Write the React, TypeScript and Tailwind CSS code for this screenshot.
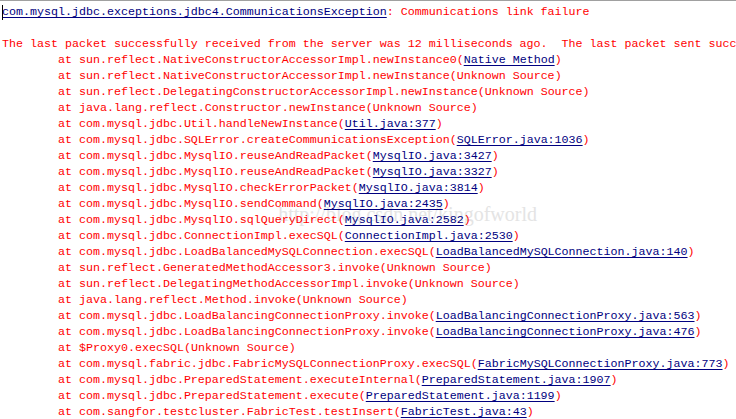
import React from 'react';

type Frame = { call: string; src: string; link?: boolean };

const frames: Frame[] = [
  { call: 'sun.reflect.NativeConstructorAccessorImpl.newInstance0', src: 'Native Method', link: true },
  { call: 'sun.reflect.NativeConstructorAccessorImpl.newInstance', src: 'Unknown Source' },
  { call: 'sun.reflect.DelegatingConstructorAccessorImpl.newInstance', src: 'Unknown Source' },
  { call: 'java.lang.reflect.Constructor.newInstance', src: 'Unknown Source' },
  { call: 'com.mysql.jdbc.Util.handleNewInstance', src: 'Util.java:377', link: true },
  { call: 'com.mysql.jdbc.SQLError.createCommunicationsException', src: 'SQLError.java:1036', link: true },
  { call: 'com.mysql.jdbc.MysqlIO.reuseAndReadPacket', src: 'MysqlIO.java:3427', link: true },
  { call: 'com.mysql.jdbc.MysqlIO.reuseAndReadPacket', src: 'MysqlIO.java:3327', link: true },
  { call: 'com.mysql.jdbc.MysqlIO.checkErrorPacket', src: 'MysqlIO.java:3814', link: true },
  { call: 'com.mysql.jdbc.MysqlIO.sendCommand', src: 'MysqlIO.java:2435', link: true },
  { call: 'com.mysql.jdbc.MysqlIO.sqlQueryDirect', src: 'MysqlIO.java:2582', link: true },
  { call: 'com.mysql.jdbc.ConnectionImpl.execSQL', src: 'ConnectionImpl.java:2530', link: true },
  { call: 'com.mysql.jdbc.LoadBalancedMySQLConnection.execSQL', src: 'LoadBalancedMySQLConnection.java:140', link: true },
  { call: 'sun.reflect.GeneratedMethodAccessor3.invoke', src: 'Unknown Source' },
  { call: 'sun.reflect.DelegatingMethodAccessorImpl.invoke', src: 'Unknown Source' },
  { call: 'java.lang.reflect.Method.invoke', src: 'Unknown Source' },
  { call: 'com.mysql.jdbc.LoadBalancingConnectionProxy.invoke', src: 'LoadBalancingConnectionProxy.java:563', link: true },
  { call: 'com.mysql.jdbc.LoadBalancingConnectionProxy.invoke', src: 'LoadBalancingConnectionProxy.java:476', link: true },
  { call: '$Proxy0.execSQL', src: 'Unknown Source' },
  { call: 'com.mysql.fabric.jdbc.FabricMySQLConnectionProxy.execSQL', src: 'FabricMySQLConnectionProxy.java:773', link: true },
  { call: 'com.mysql.jdbc.PreparedStatement.executeInternal', src: 'PreparedStatement.java:1907', link: true },
  { call: 'com.mysql.jdbc.PreparedStatement.execute', src: 'PreparedStatement.java:1199', link: true },
  { call: 'com.sangfor.testcluster.FabricTest.testInsert', src: 'FabricTest.java:43', link: true },
];

const Link: React.FC<{ children: React.ReactNode }> = ({ children }) => (
  <span className="text-[#000080] underline decoration-[#000080] underline-offset-[2px]">{children}</span>
);

const App: React.FC = () => {
  return (
    <div className="relative w-[736px] h-[419px] overflow-hidden bg-white border-t border-[#a0a0a0]">
      {/* faint blog watermark */}
      <div
        className="absolute top-[203px] right-[199px] text-[20px] leading-none text-[#e4e4e4] whitespace-pre"
        style={{ fontFamily: '"Liberation Serif", serif' }}
      >
        http://blog.csdn.net/kingofworld
      </div>

      <div
        className="relative pt-[3px] pl-[2px] text-[11.67px] leading-[16px] text-[#ff0000] whitespace-pre"
        style={{ fontFamily: '"Liberation Mono", monospace' }}
      >
        {/* caret */}
        <div className="absolute left-[2px] top-[4px] w-px h-[15px] bg-black" />
        <div>
          <Link>com.mysql.jdbc.exceptions.jdbc4.CommunicationsException</Link>: Communications link failure
        </div>
        <div>&nbsp;</div>
        <div>
          The last packet successfully received from the server was 12 milliseconds ago.  The last packet sent successfully to the server was 12 milliseconds ago.
        </div>
        {frames.map((f, i) => (
          <div key={i}>
            {'        at '}
            {f.call}(
            {f.link ? <Link>{f.src}</Link> : f.src})
          </div>
        ))}
      </div>
    </div>
  );
};

export default App;
